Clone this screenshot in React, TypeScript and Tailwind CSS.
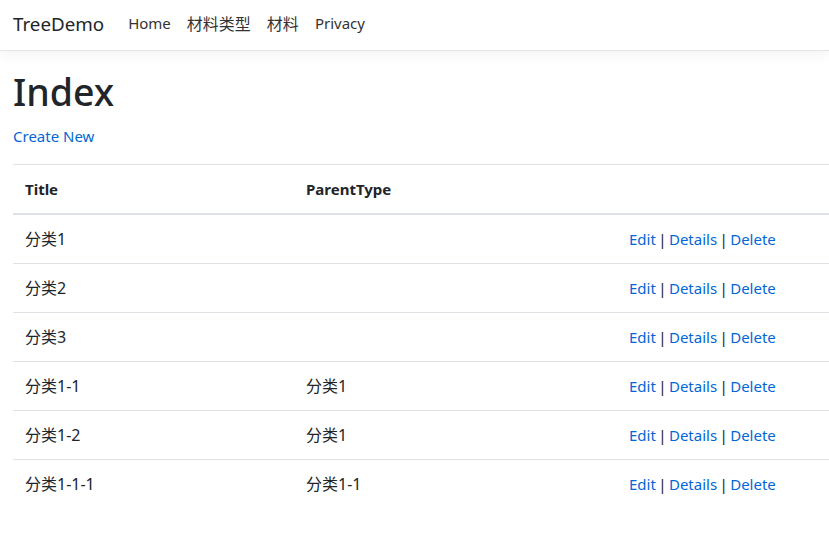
const rows = [
  { title: "分类1", parent: "" },
  { title: "分类2", parent: "" },
  { title: "分类3", parent: "" },
  { title: "分类1-1", parent: "分类1" },
  { title: "分类1-2", parent: "分类1" },
  { title: "分类1-1-1", parent: "分类1-1" },
];

const navLinks = [
  { label: "Home", cjk: false },
  { label: "材料类型", cjk: true },
  { label: "材料", cjk: true },
  { label: "Privacy", cjk: false },
];

const App = () => {
  return (
    <div className="min-h-[546px] w-full overflow-hidden bg-white text-[15px] text-[#212529] font-['Noto_Sans','Noto_Sans_CJK_SC',sans-serif]">
      {/* navbar */}
      <header className="mb-[17px] flex h-[51px] items-center border-b border-[#e5e5e5] bg-white px-[13px] pb-[2px] shadow-[0_4px_12px_rgba(0,0,0,0.05)]">
        <span className="mr-4 text-[18.75px] text-[#212529]">TreeDemo</span>
        <nav className="flex">
          {navLinks.map((link) => (
            <a
              key={link.label}
              href="#"
              className={link.cjk ? "px-2 text-base text-[#333]" : "px-2 text-[#333]"}
            >
              {link.label}
            </a>
          ))}
        </nav>
      </header>

      {/* main */}
      <main className="pl-[13px]">
        <h1 className="mb-2 text-[37.5px] leading-[48px] font-medium">Index</h1>
        <p className="mb-4 leading-6">
          <a href="#" className="text-[#0366d6]">
            Create New
          </a>
        </p>
        <table className="w-full border-collapse text-left">
          <thead>
            <tr className="border-t border-[#dee2e6]">
              <th className="w-[281px] border-b-2 border-[#dee2e6] px-3 py-3 align-bottom font-bold leading-6">Title</th>
              <th className="w-[323px] border-b-2 border-[#dee2e6] px-3 py-3 align-bottom font-bold leading-6">ParentType</th>
              <th className="border-b-2 border-[#dee2e6] px-3 py-3"></th>
            </tr>
          </thead>
          <tbody>
            {rows.map((row, i) => (
              <tr key={i} className={i > 0 ? "border-t border-[#dee2e6]" : ""}>
                <td className="px-3 py-3 text-base leading-6">{row.title}</td>
                <td className="px-3 py-3 text-base leading-6">{row.parent}</td>
                <td className="px-3 py-3 leading-6 [word-spacing:-1.5px]">
                  <a href="#" className="text-[#0366d6]">Edit</a> |{" "}
                  <a href="#" className="text-[#0366d6]">Details</a> |{" "}
                  <a href="#" className="text-[#0366d6]">Delete</a>
                </td>
              </tr>
            ))}
          </tbody>
        </table>
      </main>
    </div>
  );
};

export default App;
